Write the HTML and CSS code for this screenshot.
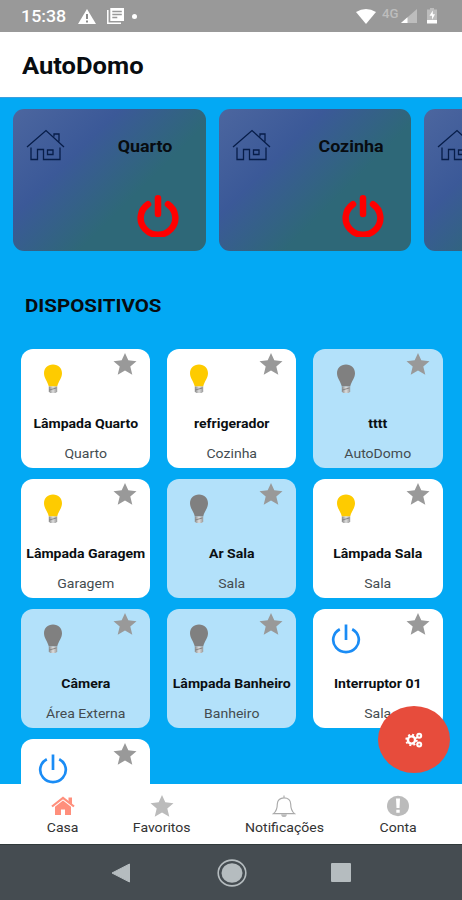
FILE: index.html
```html
<!DOCTYPE html>
<html lang="pt-BR">
<head>
<meta charset="utf-8">
<title>AutoDomo</title>
<link rel="stylesheet" href="styles.css">
</head>
<body>
<svg class="defs" width="0" height="0">
  <defs>
    <linearGradient id="base" x1="0" x2="1"><stop offset="0" stop-color="#888"/><stop offset=".5" stop-color="#ddd"/><stop offset="1" stop-color="#999"/></linearGradient>
  </defs>
  <symbol id="house" viewBox="0 0 39 32"><path d="M1 18 20 1.500 38 18M28 7.500V5h5v7.500M5 18.500V30.500h6.500V20.500h6V30.500H34V18.500M21.500 21h5.500v4.500h-5.500z" fill="none" stroke="#071d49" stroke-width="1.300"/></symbol>
  <symbol id="power-bold" viewBox="0 0 40 40"><path d="M10.500 8.800A16.500 16 0 1 0 29.500 8.800" fill="none" stroke="#f00" stroke-width="6.200" stroke-linecap="round"/><path d="M20 3.200v14.800" stroke="#f00" stroke-width="6.200" stroke-linecap="round"/></symbol>
  <symbol id="power" viewBox="0 0 30 30"><path d="M8.800 5.200A12.800 12.200 0 1 0 21.200 5.200M15 .5v15.500" fill="none" stroke="#1a8cf5" stroke-width="2.700"/></symbol>
  <symbol id="bulb" viewBox="0 0 18 30"><path d="M9 .5C3.500.5 0 4.300 0 9.200c0 5 3.600 8 4.800 13.300h8.400C14.400 17.200 18 14.200 18 9.200 18 4.300 14.500.5 9 .5z" fill="currentColor"/><path d="M4.800 22.500h8.400v5l-1.400 1.500H6.200l-1.400-1.500z" fill="url(#base)"/><path d="m5.300 26 7-2" stroke="#777" stroke-width=".8"/></symbol>
  <symbol id="star" viewBox="0 0 24 22"><path d="m12 0 3.300 7.300 8.200.9-6.200 5.400 2 8.100-7.300-4.200-7.300 4.200 2-8.100L.5 8.200l8.200-.9z" fill="currentColor"/></symbol>
</svg>

<header class="status">
  <span class="clock stretch">15:38</span>
  <svg class="warn" viewBox="0 0 18 15"><path d="M9 0 18 15H0z" fill="#fff"/><path d="M9 5v5M9 11.500v2" stroke="#777" stroke-width="1.700"/></svg>
  <svg class="news" viewBox="0 0 17 16"><path d="M3.300 0H17v13H3.300z" fill="#fff"/><path d="M.8 2v13.200H14" fill="none" stroke="#fff" stroke-width="1.500"/><path d="M5.300 3.500h9.500M5.300 6.500h9.500M5.300 9.500h5" stroke="#999" stroke-width="1.300"/></svg>
  <i class="dot"></i>
  <svg class="wifi" viewBox="0 0 20 15"><path d="M0 3Q10-3 20 3L10 15z" fill="#fff"/></svg>
  <span class="network">4G</span>
  <svg class="signal" viewBox="0 0 16 14"><path d="M16 0v14H0z" fill="#bdbdbd"/><path d="M6.500 8.300V14H0z" fill="#fff"/></svg>
  <svg class="battery" viewBox="0 0 10 16"><path d="M3 0h4v1.500h3V12H0V1.500h3z" fill="#bdbdbd"/><path d="M0 12h10v3.500H0z" fill="#fff"/><path d="M5.800 2.500 2.500 7.800H5v4l3-5.500H5.800z" fill="#fff"/></svg>
</header>

<div class="appbar"><h1>AutoDomo</h1></div>

<main class="content">
  <section class="rooms">
    <article class="room"><div class="room-top"><svg class="house"><use href="#house"/></svg><h2>Quarto</h2></div><svg class="room-power"><use href="#power-bold"/></svg></article>
    <article class="room"><div class="room-top"><svg class="house"><use href="#house"/></svg><h2>Cozinha</h2></div><svg class="room-power"><use href="#power-bold"/></svg></article>
    <article class="room"><div class="room-top"><svg class="house"><use href="#house"/></svg></div></article>
  </section>
  <h2 class="section-title stretch">DISPOSITIVOS</h2>
  <section class="devices">
    <article class="device on"><div class="device-top"><svg class="bulb"><use href="#bulb"/></svg><svg class="star"><use href="#star"/></svg></div><h3>Lâmpada Quarto</h3><p>Quarto</p></article>
    <article class="device on"><div class="device-top"><svg class="bulb"><use href="#bulb"/></svg><svg class="star"><use href="#star"/></svg></div><h3>refrigerador</h3><p>Cozinha</p></article>
    <article class="device"><div class="device-top"><svg class="bulb"><use href="#bulb"/></svg><svg class="star"><use href="#star"/></svg></div><h3>tttt</h3><p>AutoDomo</p></article>
    <article class="device on"><div class="device-top"><svg class="bulb"><use href="#bulb"/></svg><svg class="star"><use href="#star"/></svg></div><h3>Lâmpada Garagem</h3><p>Garagem</p></article>
    <article class="device"><div class="device-top"><svg class="bulb"><use href="#bulb"/></svg><svg class="star"><use href="#star"/></svg></div><h3>Ar Sala</h3><p>Sala</p></article>
    <article class="device on"><div class="device-top"><svg class="bulb"><use href="#bulb"/></svg><svg class="star"><use href="#star"/></svg></div><h3>Lâmpada Sala</h3><p>Sala</p></article>
    <article class="device"><div class="device-top"><svg class="bulb"><use href="#bulb"/></svg><svg class="star"><use href="#star"/></svg></div><h3>Câmera</h3><p>Área Externa</p></article>
    <article class="device"><div class="device-top"><svg class="bulb"><use href="#bulb"/></svg><svg class="star"><use href="#star"/></svg></div><h3>Lâmpada Banheiro</h3><p>Banheiro</p></article>
    <article class="device on"><div class="device-top"><svg class="switch"><use href="#power"/></svg><svg class="star"><use href="#star"/></svg></div><h3>Interruptor 01</h3><p>Sala</p></article>
    <article class="device on"><div class="device-top"><svg class="switch"><use href="#power"/></svg><svg class="star"><use href="#star"/></svg></div></article>
  </section>
</main>

<button class="fab" aria-label="Configurações">
  <svg viewBox="0 0 18 16"><circle cx="6.500" cy="8" r="3.600" fill="none" stroke="#fff" stroke-width="2.400"/><circle cx="6.500" cy="8" r="5.300" fill="none" stroke="#fff" stroke-width="1.800" stroke-dasharray="2 2.160"/><g fill="#fff"><circle cx="14.200" cy="3.800" r="3"/><circle cx="14.200" cy="12.400" r="3"/></g><g fill="#e9796d"><circle cx="14.200" cy="3.800" r="1"/><circle cx="14.200" cy="12.400" r="1"/></g></svg>
</button>

<nav class="tabs">
  <div class="tab home"><svg viewBox="0 0 24 22"><path d="M1 11.500 12 2.800 23 11.500" fill="none" stroke="#ff8f7c" stroke-width="2.200"/><path d="M17.500 2.500H21v7l-3.500-3zM4 11.700 12 5.500l8 6.200V20h-6v-5.500h-4V20H4z" fill="#ff8f7c"/></svg><span>Casa</span></div>
  <div class="tab fav"><svg viewBox="0 0 24 22"><use href="#star"/></svg><span>Favoritos</span></div>
  <div class="tab bell"><svg viewBox="0 0 24 23"><path d="M1 19.500c4-3 4-7 4-10 0-4 3-6.500 7-6.500s7 2.500 7 6.500c0 3 0 7 4 10zM12 .5V3" fill="none" stroke="#aaa" stroke-width="1.200"/><path d="M9 20h6c0 4-6 4-6 0z" fill="#bbb"/></svg><span>Notificações</span></div>
  <div class="tab account"><svg viewBox="0 0 24 22"><ellipse cx="12" cy="11" rx="11" ry="10.200" fill="#bbb"/><path d="M10 3.500h4l-.5 9.500h-3zM10.300 14.800h3.400v3h-3.400z" fill="#fff"/></svg><span>Conta</span></div>
</nav>

<footer class="system">
  <svg class="back" viewBox="0 0 20 20"><path d="M1 10 18.500 1v18z" fill="#b5bcbf" stroke="#b5bcbf" stroke-linejoin="round"/></svg>
  <svg class="circle" viewBox="0 0 30 28"><ellipse cx="15" cy="14" rx="13.800" ry="12.900" fill="none" stroke="#b5bcbf" stroke-width="1.600"/><ellipse cx="15" cy="14" rx="10.500" ry="9.800" fill="#b5bcbf"/></svg>
  <i class="square"></i>
</footer>
</body>
</html>
```
FILE: styles.css
```css
* { box-sizing: border-box; }
body {
  margin: 0;
  width: 462px;
  height: 900px;
  display: flex;
  flex-direction: column;
  overflow: hidden;
  position: relative;
  background: #03a9f4;
  color: #080c10;
  font-family: Roboto, sans-serif;
}
h1, h2, h3, p { margin: 0; }
svg { display: block; flex: none; }
.defs { position: absolute; }
.stretch { transform: scaleX(1.08); transform-origin: left center; }

.status {
  height: 32px;
  flex: none;
  display: flex;
  align-items: center;
  padding: 0 25px 0 21px;
  background: #999;
  color: #fff;
}
.clock { width: 57px; font-size: 16.500px; font-weight: 500; }
.warn { width: 18px; height: 15px; }
.news { width: 17px; height: 16px; margin-left: 11px; }
.dot { width: 5px; height: 5px; margin-left: 8px; border-radius: 50%; background: #fff; }
.wifi { width: 20px; height: 15px; margin-left: auto; }
.network { width: 19px; margin: -5px 0 0 6px; font-size: 12px; line-height: 14px; font-weight: 500; color: #bdbdbd; transform: scaleX(1.1); transform-origin: left; }
.signal { width: 16px; height: 14px; }
.battery { width: 10px; height: 16px; margin-left: 10px; }

.appbar {
  height: 66px;
  flex: none;
  display: flex;
  align-items: center;
  padding: 3px 21.500px 0;
  background: #fff;
  border-bottom: 1px solid #3c9fdd;
}
h1 { font-size: 23px; font-weight: 700; transform: scaleX(1.11); transform-origin: left center; }

.content { height: 686px; flex: none; overflow: hidden; padding-top: 11px; }
.rooms { display: flex; gap: 13px; padding-left: 13px; width: 640px; }
.room {
  width: 192.500px;
  height: 142px;
  flex: none;
  display: flex;
  flex-direction: column;
  justify-content: space-between;
  padding: 20px 27px 14px 13px;
  border-radius: 11px;
  background: linear-gradient(135deg, #4c669f 0%, #3b5998 32%, #2e6878 62%, #2e6878 100%);
}
.room-top { display: flex; align-items: center; }
.house { width: 39px; height: 32px; }
.room h2 { width: 100px; flex: none; margin: 1px 0 0 30px; text-align: center; font-size: 17px; line-height: 22px; transform: scaleX(1.050); }
.room-power { width: 42px; height: 42px; align-self: flex-end; }

.section-title { margin: 43px 0 0 25px; font-size: 19px; line-height: 24px; }

.devices {
  display: grid;
  grid-template-columns: repeat(3, 129.500px);
  grid-auto-rows: 119px;
  gap: 11.300px 16.800px;
  padding: 30.500px 0 0 20.600px;
}
.device { border-radius: 12px; background: #b3e1fa; color: #808080; text-align: center; }
.device.on { background: #fff; color: #fecb00; }
.device-top { height: 66px; display: flex; justify-content: space-between; align-items: flex-start; padding: 4px 13px 0 23.500px; }
.bulb { width: 18px; height: 30px; margin-top: 11px; }
.switch { width: 30px; height: 30px; margin: 11px 0 0 -6px; }
.star { width: 24px; height: 22px; color: #999; }
.device h3 { font-size: 13px; line-height: 18px; white-space: nowrap; color: #0b0f12; transform: scaleX(1.08); }
.device p { margin-top: 12px; font-size: 13px; line-height: 18px; color: #444c50; transform: scaleX(1.08); }

.fab {
  position: absolute;
  left: 378px;
  top: 706px;
  width: 72px;
  height: 67px;
  padding: 0;
  border: 0;
  border-radius: 50%;
  background: #e74c3c;
  display: grid;
  place-items: center;
}
.fab svg { width: 18px; height: 16px; }

.tabs { height: 60px; flex: none; display: flex; justify-content: space-between; padding: 11px 47px 0 48px; background: #fff; font-size: 13px; color: #333; }
.tab { display: flex; flex-direction: column; align-items: center; justify-content: space-between; height: 41px; }
.tab svg { width: 24px; height: 22px; }
.tab span { line-height: 16px; transform: scaleX(1.08); }
.fav { color: #bbb; margin-left: -2px; }
.fav span { color: #333; }

.system { height: 56px; flex: none; display: flex; align-items: center; background: #454c51; border-top: 1px solid #303a3b; }
.back { width: 20px; height: 20px; margin-left: 111px; }
.circle { width: 30px; height: 28px; margin-left: 86px; }
.square { width: 20px; height: 19px; margin-left: 84px; border-radius: 1px; background: #b5bcbf; }
```
